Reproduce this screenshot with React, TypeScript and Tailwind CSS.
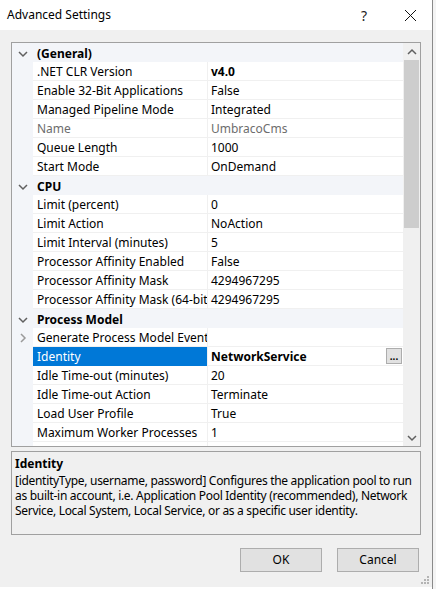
import React from "react";

type Row = { name: string; value?: string; bold?: boolean; dim?: boolean; selected?: boolean; expand?: boolean; button?: boolean };
type Group = { title: string; rows: Row[] };

const groups: Group[] = [
  {
    title: "(General)",
    rows: [
      { name: ".NET CLR Version", value: "v4.0", bold: true },
      { name: "Enable 32-Bit Applications", value: "False" },
      { name: "Managed Pipeline Mode", value: "Integrated" },
      { name: "Name", value: "UmbracoCms", dim: true },
      { name: "Queue Length", value: "1000" },
      { name: "Start Mode", value: "OnDemand" },
    ],
  },
  {
    title: "CPU",
    rows: [
      { name: "Limit (percent)", value: "0" },
      { name: "Limit Action", value: "NoAction" },
      { name: "Limit Interval (minutes)", value: "5" },
      { name: "Processor Affinity Enabled", value: "False" },
      { name: "Processor Affinity Mask", value: "4294967295" },
      { name: "Processor Affinity Mask (64-bit option)", value: "4294967295" },
    ],
  },
  {
    title: "Process Model",
    rows: [
      { name: "Generate Process Model Event Log Entry", expand: true },
      { name: "Identity", value: "NetworkService", bold: true, selected: true, button: true },
      { name: "Idle Time-out (minutes)", value: "20" },
      { name: "Idle Time-out Action", value: "Terminate" },
      { name: "Load User Profile", value: "True" },
      { name: "Maximum Worker Processes", value: "1" },
      { name: "" },
    ],
  },
];

const Chevron = ({ dir }: { dir: "down" | "right" | "up" }) => {
  const d = dir === "down" ? "M1 3 L5 7 L9 3" : dir === "up" ? "M1 7 L5 3 L9 7" : "M3 1 L7 5 L3 9";
  return (
    <svg width="10" height="10" viewBox="0 0 10 10" className="block">
      <path d={d} fill="none" stroke={dir === "right" ? "#9a9a9a" : "#606060"} strokeWidth="1.5" />
    </svg>
  );
};

export default function App() {
  return (
    <div className="flex w-[436px] h-[589px] overflow-hidden bg-white text-[12px] text-black" style={{ fontFamily: '"Noto Sans", "Open Sans", sans-serif' }}>
      <div className="flex flex-col w-[432px] h-[587px] bg-[#f0f0f0]">
        {/* title bar */}
        <div className="flex items-center h-[30px] bg-white shrink-0">
          <span className="ml-[7px] text-[12px]">Advanced Settings</span>
          <span className="ml-auto mr-[37px] text-[14px] text-[#222]">?</span>
          <svg width="13" height="13" viewBox="0 0 13 13" className="mr-[15px]">
            <path d="M1 1 L12 12 M12 1 L1 12" stroke="#111" strokeWidth="1" />
          </svg>
        </div>

        {/* property grid */}
        <div className="mt-[12px] ml-[11px] w-[410px] h-[405px] border border-[#a0a0a0] bg-white flex overflow-hidden shrink-0">
          <div className="w-[391px] h-full overflow-hidden">
            {groups.map((g) => (
              <div key={g.title}>
                <div className="flex items-center h-[19px] pt-[2px] bg-[#f3f5f9]">
                  <div className="w-[21px] flex justify-center">
                    <Chevron dir="down" />
                  </div>
                  <span className="ml-[4px] font-bold">{g.title}</span>
                </div>
                {g.rows.map((r, i) => (
                  <div key={i} className="flex h-[19px]">
                    <div className="w-[21px] bg-[#f3f5f9] flex items-center justify-center">
                      {r.expand && <Chevron dir="right" />}
                    </div>
                    <div
                      className={`w-[174px] flex items-center pt-[2px] pl-[4px] whitespace-nowrap overflow-hidden border-b ${
                        r.selected ? "bg-[#0078d7] text-white border-[#0078d7]" : "border-[#f0f0f0]"
                      } ${r.dim ? "text-[#6d6d6d]" : ""}`}
                    >
                      {r.name}
                    </div>
                    <div className="w-[1px] bg-[#f0f0f0]" />
                    <div
                      className={`flex-1 flex items-center pt-[2px] pl-[3px] border-b border-[#f0f0f0] whitespace-nowrap ${r.bold ? "font-bold" : ""} ${
                        r.dim ? "text-[#6d6d6d]" : ""
                      }`}
                    >
                      {r.value}
                      {r.button && (
                        <span className="ml-auto mr-[1px] -mt-[2px] w-[16px] h-[16px] border border-[#adadad] bg-[#e1e1e1] flex items-end justify-center text-[10px] leading-[10px] pb-[2px]">
                          ...
                        </span>
                      )}
                    </div>
                  </div>
                ))}
              </div>
            ))}
          </div>
          {/* scrollbar */}
          <div className="w-[17px] h-full bg-[#f0f0f0] flex flex-col">
            <div className="h-[17px] flex items-center justify-center">
              <Chevron dir="up" />
            </div>
            <div className="mx-[1px] h-[168px] bg-[#cdcdcd]" />
            <div className="flex-1" />
            <div className="h-[17px] flex items-center justify-center">
              <Chevron dir="down" />
            </div>
          </div>
        </div>

        {/* description */}
        <div className="mt-[4px] ml-[11px] w-[410px] h-[84px] border border-[#a0a0a0] px-[3px] pt-[3px] shrink-0">
          <div className="font-bold leading-[17px]">Identity</div>
          <div className="leading-[15px] mt-[1px] tracking-[-0.3px]">
            [identityType, username, password] Configures the application pool to run as built-in account, i.e. Application Pool Identity (recommended), Network Service, Local System, Local Service, or as a specific user identity.
          </div>
        </div>

        {/* buttons */}
        <div className="flex justify-end gap-[15px] mt-[13px] mr-[13px]">
          <button className="w-[82px] h-[24px] bg-[#e1e1e1] border border-[#adadad]">OK</button>
          <button className="w-[82px] h-[24px] bg-[#e1e1e1] border border-[#adadad]">Cancel</button>
        </div>

        <div className="flex-1 flex items-end justify-end pr-[2px] pb-[2px]">
          <svg width="10" height="10" viewBox="0 0 10 10">
            <g fill="#b4b4b4">
              <rect x="7" y="1" width="2" height="2" />
              <rect x="4" y="4" width="2" height="2" />
              <rect x="7" y="4" width="2" height="2" />
              <rect x="1" y="7" width="2" height="2" />
              <rect x="4" y="7" width="2" height="2" />
              <rect x="7" y="7" width="2" height="2" />
            </g>
          </svg>
        </div>
      </div>
      <div className="w-[4px] h-full border-l border-[#8a8a8a] bg-[#f4f4f4]" />
    </div>
  );
}
